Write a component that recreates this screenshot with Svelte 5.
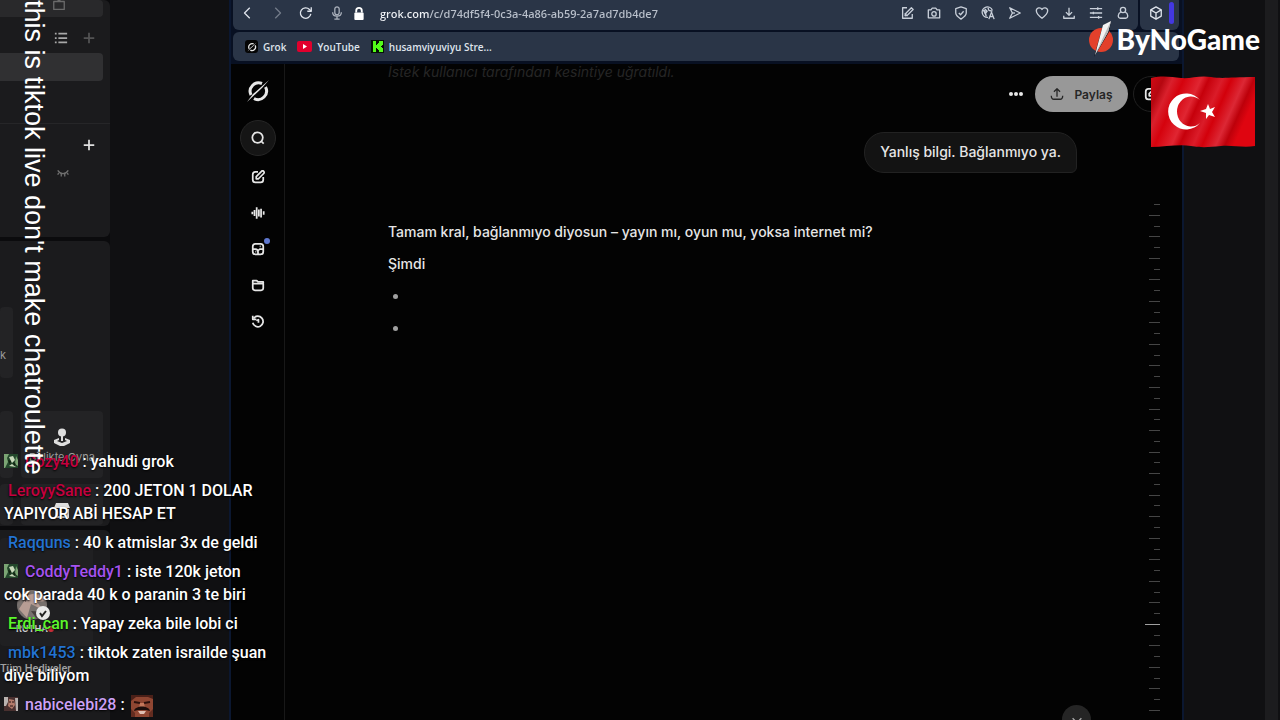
<script lang="ts">
  type Message = {
    name: string;
    color: string;
    text: string;
    badge?: 'green' | 'face';
    emote?: boolean;
  };

  const messages: Message[] = [
    { name: 'Cozy40', color: '#c4003f', text: 'yahudi grok', badge: 'green' },
    { name: 'LeroyySane', color: '#c4003f', text: '200 JETON 1 DOLAR YAPIYOR ABİ HESAP ET' },
    { name: 'Raqquns', color: '#2373d1', text: '40 k atmislar 3x de geldi' },
    { name: 'CoddyTeddy1', color: '#a653f0', text: 'iste 120k jeton cok parada 40 k o paranin 3 te biri', badge: 'green' },
    { name: 'Erdi_can', color: '#5cf72c', text: 'Yapay zeka bile lobi ci' },
    { name: 'mbk1453', color: '#2373d1', text: 'tiktok zaten israilde şuan diye biliyom' },
    { name: 'nabicelebi28', color: '#cda2f7', text: '', badge: 'face', emote: true }
  ];

  const tools = [
    { label: 'Edit page', paths: ['M8 2H3v12h11V9', 'M6 11l1-3 6-6 2 2-6 6z', 'M6 8v3h3'] },
    { label: 'Snapshot', paths: ['M1.500 4.500h3l1.500-2h4l1.500 2h3v9h-13z', 'M8 6.500a2.500 2.500 0 1 0 0 5 2.500 2.500 0 0 0 0-5z'] },
    { label: 'Ad blocker', paths: ['M8 1l6 2v5c0 3-3 5-6 7-3-2-6-4-6-7V3z', 'M5.500 8l2 2 3.500-4'] },
    { label: 'Translate', paths: ['M8 13a6 6 0 1 1 5-8', 'M4 3l3 3-2 2 1 4M8 2l1 3 4 1', 'M3 5l3 1-1 3z', 'M9 15l3-8 3 8M10 12h4'] },
    { label: 'Send', paths: ['M2 2l12 6-12 6 3-6z', 'M5 8h3'] },
    { label: 'Favorites', paths: ['M8 14C4 11 1.500 8.500 1.500 5.500c0-4 5-4.500 6.500-1.500 1.500-3 6.500-2.500 6.500 1.500C14.500 8.500 12 11 8 14z'] },
    { label: 'Downloads', paths: ['M8 2v8M4.500 7L8 10.500 11.500 7', 'M2 11v3h12v-3'] },
    { label: 'Easy setup', paths: ['M1 3h14M1 8h14M1 13h14', 'M10 1.500v3M5 6.500v3M11 11.500v3'] },
    { label: 'Profile', paths: ['M8 1.500a3 3 0 1 0 0 6 3 3 0 0 0 0-6z', 'M5.500 7C2 8 1.500 14 5 14h6c3.500 0 3-6-0.500-7'] }
  ];

  const navItems = [
    { label: 'New chat', paths: ['M8 2H5a3 3 0 0 0-3 3v6a3 3 0 0 0 3 3h6a3 3 0 0 0 3-3V8', 'M6 10V7.500L12 1.500a1.700 1.700 0 0 1 2.500 2.500L8.500 10z'] },
    { label: 'Voice', paths: ['M1.500 6.500v3M4 4.500v7M6.500 1.500v13M9 4v8M11.500 3v10M14.500 6v4'] },
    { label: 'Imagine', paths: ['M5 2h6a3 3 0 0 1 3 3v6a3 3 0 0 1-3 3H5a3 3 0 0 1-3-3V5a3 3 0 0 1 3-3z', 'M2 8h3a3 3 0 0 1 3 3v3', 'M8 10l2-2h4M10 5h1M5 11h1'], dot: true },
    { label: 'Projects', paths: ['M2 6V3h4.500L8 4.500h6V6', 'M2 6.500h12v5A2.500 2.500 0 0 1 11.500 14h-7A2.500 2.500 0 0 1 2 11.500z'] },
    { label: 'History', paths: ['M3 5a6 6 0 1 1-1 5', 'M2 2v4h4', 'M6 7.500l2.500-1V10'] }
  ];

  const activeTick = 39;
  const ticks = Array.from({ length: 48 }, (_, i) => i);
</script>

{#snippet icon(paths: string[])}
  <svg class="icon" viewBox="0 0 16 16" aria-hidden="true">
    {#each paths as d}
      <path {d} />
    {/each}
  </svg>
{/snippet}

{#snippet grokMark()}
  <svg class="grok" viewBox="0 0 24 24" aria-hidden="true">
    <path d="M16 4.500A8.500 8.500 0 0 0 5 16M8 19.500A8.500 8.500 0 0 0 19.500 8" />
    <path class="slash" d="M1 23L7 15 23 1 16 9z" />
  </svg>
{/snippet}

<div class="desktop">
  <aside class="studio">
    <section class="card scenes">
      <div class="source top">
        <svg class="icon" viewBox="0 0 16 16" aria-hidden="true"><path d="M2 4h12v9H2zM6 1l2 3 2-3" /></svg>
      </div>
      <div class="scene-tools">
        <button type="button" aria-label="List view">
          <svg class="icon" viewBox="0 0 16 16"><path d="M1 3h2M5 3h10M1 8h2M5 8h10M1 13h2M5 13h10" /></svg>
        </button>
        <button type="button" class="dim" aria-label="Add scene">
          <svg class="icon" viewBox="0 0 16 16"><path d="M8 2v12M2 8h12" /></svg>
        </button>
      </div>
      <div class="source selected"></div>
      <div class="source-tools">
        <button type="button" aria-label="Add source">
          <svg class="icon" viewBox="0 0 16 16"><path d="M8 2v12M2 8h12" /></svg>
        </button>
      </div>
      <button type="button" class="eye" aria-label="Show source">
        <svg class="icon" viewBox="0 0 16 16"><path d="M2 5c3 5 9 5 12 0M3 8l-1 2M6 9v3M10 9v3M13 8l1 2" /></svg>
      </button>
    </section>

    <section class="card widgets">
      <div class="cell tall">k</div>
      <div class="cell first"></div>
      <div class="cell">
        <svg class="joystick" viewBox="0 0 18 18" aria-hidden="true">
          <path d="M8 8h2v5H8z" />
          <circle cx="9" cy="4.500" r="4" />
          <path fill-rule="evenodd" d="M6 10l-5 2v3l6 3h4l6-3v-3l-5-2v2l2 1-5 2-5-2 2-1z" />
        </svg>
        <span>Birlikte Oyna</span>
      </div>
      <div class="cell first"></div>
      <div class="cell">
        <svg class="joystick" viewBox="0 0 18 18" aria-hidden="true"><path d="M3 2h12l2 5H1zM2 8h3v7h8V8h3v9H2z" /></svg>
      </div>
    </section>

    <section class="card gifts">
      <div class="gift">
        <svg class="avatar" viewBox="0 0 36 32" aria-hidden="true">
          <circle cx="16" cy="16" r="15" fill="#77706d" />
          <path d="M3 20L12 6l13-3 5 9-9 1 6 8-12-6-4 14z" fill="#b79d94" />
          <path d="M5 9l8-6-3 10zM15 22l14 1-8 7z" fill="#463d3d" />
          <circle cx="27" cy="24" r="7" fill="#e8e8e8" />
          <path d="M24 24l2 3 4-5" fill="none" stroke="#222" stroke-width="2" />
        </svg>
        <strong>RUTHA<i></i></strong>
      </div>
      <p>Tüm Hediyeler</p>
    </section>
  </aside>

  <div class="browser">
    <div class="bars">
      <div class="toolbar">
        <div class="address">
          <button type="button" aria-label="Back">{@render icon(['M10 2L4 8l6 6'])}</button>
          <button type="button" class="dim" aria-label="Forward">{@render icon(['M6 2l6 6-6 6'])}</button>
          <button type="button" aria-label="Reload">{@render icon(['M13.500 9A6 6 0 1 1 12 4l2 2', 'M14 1.500V6H9.500'])}</button>
          <button type="button" class="mic" aria-label="Voice search">
            {@render icon(['M8 1a2.500 2.500 0 0 0-2.500 2.500v4a2.500 2.500 0 0 0 5 0v-4A2.500 2.500 0 0 0 8 1z', 'M3 7c0 6 10 6 10 0M8 11.500V15M5 15h6'])}
          </button>
          <svg class="lock" viewBox="0 0 12 14" aria-hidden="true">
            <path d="M3 6V4a3 3 0 0 1 6 0v2" />
            <rect x="1" y="6" width="10" height="8" rx="1" />
          </svg>
          <input type="text" aria-label="Address" value="grok.com/c/d74df5f4-0c3a-4a86-ab59-2a7ad7db4de7" />
          <div class="tools">
            {#each tools as tool}
              <button type="button" aria-label={tool.label}>{@render icon(tool.paths)}</button>
            {/each}
          </div>
        </div>
        <div class="extension">
          <button type="button" aria-label="Extensions">
            {@render icon(['M8 1l6 3.500v7L8 15l-6-3.500v-7z', 'M2 4.500L8 8l6-3.500M8 8v7'])}
          </button>
          <span class="accent"></span>
        </div>
      </div>

      <nav class="bookmarks">
        <a href="#grok"><span class="favicon">{@render grokMark()}</span>Grok</a>
        <a href="#youtube">
          <svg class="youtube" viewBox="0 0 15 11" aria-hidden="true">
            <rect width="15" height="11" rx="2" fill="#e1002d" />
            <path d="M6 3l4 2.500L6 8z" fill="#fff" />
          </svg>YouTube
        </a>
        <a href="#kick">
          <svg class="kick" viewBox="0 0 13 13" aria-hidden="true">
            <rect width="13" height="13" fill="#061206" />
            <path d="M2 1h3v4h1V4h1V3h1V1h4v4h-1v1h-1v1h1v1h1v4H8v-2H7V9H6V8H5v4H2z" fill="#53fc18" />
          </svg>husamviyuviyu Stre...
        </a>
      </nav>
    </div>

    <div class="page">
      <nav class="rail">
        <a class="home" href="#home" aria-label="Grok">{@render grokMark()}</a>
        <button type="button" class="search" aria-label="Search">
          {@render icon(['M7.500 1.500a6 6 0 1 0 0 12 6 6 0 0 0 0-12z', 'M12 12l2.500 2.500'])}
        </button>
        {#each navItems as item}
          <button type="button" aria-label={item.label}>
            {@render icon(item.paths)}
            {#if item.dot}<span class="dot"></span>{/if}
          </button>
        {/each}
      </nav>

      <main>
        <p class="interrupted">İstek kullanıcı tarafından kesintiye uğratıldı.</p>
        <header>
          <button type="button" class="more" aria-label="More">
            <svg viewBox="0 0 16 16" aria-hidden="true">
              <circle cx="3" cy="8" r="2" /><circle cx="8" cy="8" r="2" /><circle cx="13" cy="8" r="2" />
            </svg>
          </button>
          <button type="button" class="share">
            {@render icon(['M8 11V2M4.500 5.500L8 2l3.500 3.500', 'M1.500 10c0 3 1 4 3 4h7c2 0 3-1 3-4'])}
            Paylaş
          </button>
          <button type="button" class="compose" aria-label="New chat">{@render icon(navItems[0].paths)}</button>
        </header>

        <div class="conversation">
          <div class="thread">
            <p class="bubble">Yanlış bilgi. Bağlanmıyo ya.</p>
            <article>
              <p>Tamam kral, bağlanmıyo diyosun – yayın mı, oyun mu, yoksa internet mi?</p>
              <p>Şimdi</p>
              <ul>
                <li></li>
                <li></li>
              </ul>
            </article>
          </div>
          <div class="timeline" aria-hidden="true">
            {#each ticks as tick}
              <span class:long={tick % 2 === 1} class:active={tick === activeTick}></span>
            {/each}
          </div>
        </div>
        <button type="button" class="scroll-down" aria-label="Scroll down">{@render icon(['M3 6l5 5 5-5'])}</button>
      </main>
    </div>
  </div>

  <div class="gutter"><span></span></div>

  <ul class="chat">
    {#each messages as message}
      <li>
        {#if message.badge}
          <svg class="badge" viewBox="0 0 14 14" aria-hidden="true">
            {#if message.badge === 'green'}
              <rect width="14" height="14" fill="#23472b" />
              <path d="M0 0h5L3 4l1 4-3 6H0zM12 2l2 4v6l-3-2z" fill="#7ba574" />
              <path d="M5 3l4-1 2 4-3 3zM5 12l3-2 4 3z" fill="#c9d9bb" />
              <path d="M4 6l3 1-1 4zM9 8l3 2-2 2z" fill="#10220f" />
            {:else}
              <rect width="14" height="14" fill="#49302f" />
              <path d="M0 0h4v5L2 9H0zM11 1h3v13h-2z" fill="#b9b3b0" />
              <path d="M5 2l5 1 1 5-3 4-4-3z" fill="#b37b6b" />
              <path d="M5 5h2M8 5h2M6 9h3" stroke="#241514" />
            {/if}
          </svg>
        {/if}<span class="name" style:color={message.color}>{message.name}</span>
        : {message.text}
        {#if message.emote}
          <svg class="emote" viewBox="0 0 22 22" role="img" aria-label="Laughing face">
            <rect width="22" height="22" fill="#8f4632" />
            <path d="M0 0h22v4L17 2H5L0 6z" fill="#4b2018" />
            <path d="M3 7l6 1M13 8l6-1" stroke="#2c100c" stroke-width="2" />
            <path d="M9 8h4l1 5H8z" fill="#c4775b" />
            <path d="M3 16c1-6 15-6 16 0l-4-1H7z" fill="#1c0d0b" />
            <path d="M7 16h8l-2 3H9z" fill="#dfc0b4" />
            <path d="M0 14l4 4v4H0zM22 14l-4 4v4h4z" fill="#632c20" />
          </svg>
        {/if}
      </li>
    {/each}
  </ul>

  <p class="banner">this is tiktok live don't make chatroulette</p>

  <div class="sponsor">
    <svg viewBox="0 0 26 36" aria-hidden="true">
      <circle cx="13" cy="19" r="12" fill="#e3402b" />
      <path d="M15 4L23 0l-2 11L6 36z" fill="#111821" />
      <path d="M15 4l8-4-3 11L7 34z" fill="#f3f3f3" />
      <path d="M23 0l-3 11L7 34 19 8z" fill="#b9babb" />
    </svg>
    <span>ByNoGame</span>
  </div>

  <svg class="flag" viewBox="0 0 104 72" role="img" aria-label="Turkish flag">
    <defs>
      <linearGradient id="folds" x1="0" y1="0" x2="1" y2="0.300">
        <stop offset="0" stop-color="#d20a14" />
        <stop offset="0.120" stop-color="#b50710" />
        <stop offset="0.200" stop-color="#d9202c" />
        <stop offset="0.300" stop-color="#d5020d" />
        <stop offset="0.450" stop-color="#e02632" />
        <stop offset="0.520" stop-color="#c6000b" />
        <stop offset="0.640" stop-color="#da1c29" />
        <stop offset="0.720" stop-color="#d3000b" />
        <stop offset="0.840" stop-color="#dc2835" />
        <stop offset="0.920" stop-color="#bd000a" />
        <stop offset="1" stop-color="#df0510" />
      </linearGradient>
    </defs>
    <path d="M0 2C12-1 20 1 30 2S48-1 60 1s20 0 44 0v69c-12 2-22-1-34 0s-18 2-30 0-26 1-40 1z" fill="url(#folds)" />
    <path d="M49 24A18 18 0 1 0 49 47A14 15 0 1 1 49 24z" fill="#fff" />
    <path d="M57 28l2 5 5-2-3 5 3 5-6-2-3 4v-6l-6-2 6-2z" fill="#fff" />
  </svg>
</div>

<style>
  :global(body) {
    background: #101012;
  }

  .desktop {
    position: relative;
    display: flex;
    height: 100vh;
    overflow: hidden;
    background: #101012;
    color: #e6e6e6;
    font-family: Inter, 'Liberation Sans', sans-serif;
  }

  .desktop * {
    box-sizing: border-box;
  }

  p,
  ul {
    margin: 0;
    padding: 0;
  }

  button {
    display: flex;
    flex: none;
    align-items: center;
    justify-content: center;
    border: 0;
    padding: 0;
    background: transparent;
    color: inherit;
    font: inherit;
    cursor: pointer;
  }

  a {
    color: inherit;
    text-decoration: none;
  }

  .icon {
    flex: none;
    width: 14px;
    height: 14px;
    fill: none;
    stroke: currentColor;
    stroke-width: 1.500;
    stroke-linejoin: round;
  }

  .dim {
    opacity: 0.4;
  }

  /* streaming studio on the left */
  .studio {
    display: flex;
    flex: none;
    flex-direction: column;
    gap: 4px;
    width: 110px;
    background: #0b0b0d;
  }

  .card {
    flex: none;
    border-radius: 0 6px 6px 0;
    background: #1b1b1d;
  }

  .scenes {
    height: 237px;
  }

  .source {
    width: 103px;
    height: 28px;
    border-radius: 0 4px 4px 0;
    background: #303032;
  }

  .source.top {
    display: flex;
    justify-content: center;
    height: 17px;
    padding-left: 14px;
    background: #29292b;
    color: #6a6a6a;
  }

  .source.top .icon {
    margin-top: -2px;
  }

  .scene-tools,
  .source-tools {
    display: flex;
    align-items: center;
    justify-content: flex-end;
    gap: 14px;
    height: 36px;
    padding: 6px 14px 0 0;
    color: #a8a8a8;
  }

  .scene-tools .icon,
  .source-tools .icon {
    stroke-width: 2;
  }

  .source-tools {
    height: 43px;
    margin-top: 42px;
    padding-top: 0;
    border-top: 1px solid #262628;
    color: #e0e0e0;
  }

  .eye {
    margin-left: 56px;
    color: #707070;
  }

  .widgets {
    display: grid;
    grid-template-columns: 13px 82px;
    grid-template-rows: 98px 67px 41px;
    gap: 6px 8px;
    height: 285px;
    padding-top: 66px;
  }

  .cell {
    display: flex;
    flex-direction: column;
    grid-column: 2;
    align-items: center;
    padding-top: 17px;
    border-radius: 4px;
    background: #232325;
    color: #9b9b9b;
    font-size: 11px;
    line-height: 16px;
    white-space: nowrap;
  }

  .cell.first,
  .cell.tall {
    grid-column: 1;
  }

  .cell.tall {
    align-items: flex-start;
    height: 71px;
    padding-top: 40px;
  }

  .joystick {
    flex: none;
    width: 18px;
    height: 18px;
    margin-bottom: 3px;
    fill: #dedede;
  }

  .gifts {
    height: 200px;
    padding-top: 8px;
  }

  .gift {
    display: flex;
    flex-direction: column;
    width: 93px;
    height: 108px;
    padding: 50px 0 0 16px;
    border-radius: 4px;
    background: #202022;
    color: #d8d8d8;
    font-size: 11px;
    line-height: 14px;
  }

  .gift i {
    display: inline-block;
    width: 6px;
    height: 6px;
    border-radius: 50%;
    background: #cf2e3a;
  }

  .gift strong {
    font-size: 9px;
  }

  .avatar {
    width: 36px;
    height: 34px;
  }

  .gifts p {
    padding-top: 15px;
    color: #a0a0a0;
    font-family: Roboto, sans-serif;
    font-size: 11px;
    font-weight: 500;
    line-height: 16px;
    white-space: nowrap;
  }

  /* browser window */
  .browser {
    display: flex;
    flex: 1;
    flex-direction: column;
    min-width: 0;
    margin-left: 119px;
    border: solid #0b1730;
    border-width: 0 2px;
    background: #030303;
  }

  .bars {
    display: flex;
    flex-direction: column;
    gap: 2px;
    padding: 0 3px 3px 2px;
    background: #081022;
    color: #dfe4ec;
    font-family: 'Open Sans', 'Noto Sans', sans-serif;
    font-size: 11px;
  }

  .toolbar {
    display: flex;
    gap: 2px;
    height: 30px;
  }

  .address,
  .extension,
  .bookmarks {
    display: flex;
    align-items: center;
    background: #2a3547;
  }

  .address {
    flex: 1;
    gap: 15px;
    min-width: 0;
    padding: 0 8px 4px;
    border-radius: 0 0 6px 6px;
  }

  .address .mic {
    margin-left: 2px;
    opacity: 0.7;
  }

  .lock {
    flex: none;
    width: 12px;
    height: 13px;
    margin-left: -6px;
    fill: #fff;
  }

  .lock path {
    fill: none;
    stroke: #fff;
    stroke-width: 2;
  }

  .address input {
    flex: 1;
    min-width: 0;
    border: 0;
    padding: 0;
    background: linear-gradient(90deg, #f2f4f8 49px, #b9c0cb 49px);
    background-clip: text;
    outline: 0;
    color: transparent;
    font: inherit;
    font-weight: 600;
  }

  .tools {
    display: flex;
    gap: 13px;
    color: #c9d0da;
  }

  .extension {
    justify-content: space-between;
    width: 39px;
    padding: 0 5px 4px 9px;
    border-radius: 0 0 6px 6px;
  }

  .accent {
    width: 5px;
    height: 22px;
    border-radius: 3px;
    background: #4338e0;
  }

  .bookmarks {
    gap: 11px;
    height: 29px;
    padding: 0 12px;
    border-radius: 6px;
    font-size: 10px;
    font-weight: 600;
  }

  .bookmarks a {
    display: flex;
    align-items: center;
    gap: 5px;
  }

  .favicon {
    display: flex;
    align-items: center;
    justify-content: center;
    width: 13px;
    height: 13px;
    border-radius: 3px;
    background: #050505;
  }

  .grok {
    width: 10px;
    height: 10px;
    fill: none;
    stroke: #e8e8e8;
    stroke-width: 3;
  }

  .grok .slash {
    fill: #e8e8e8;
    stroke: none;
  }

  .youtube {
    width: 15px;
    height: 11px;
  }

  .kick {
    width: 13px;
    height: 13px;
  }

  /* grok page */
  .page {
    display: flex;
    flex: 1;
    min-height: 0;
  }

  .rail {
    display: flex;
    flex: none;
    flex-direction: column;
    align-items: center;
    width: 54px;
    padding-top: 15px;
    border-right: 1px solid #181818;
  }

  .rail button {
    position: relative;
    width: 36px;
    height: 36px;
  }

  .rail button.search {
    margin: 17px 0 3px;
    border: 1px solid #262626;
    border-radius: 50%;
    background: #151515;
  }

  .home {
    display: flex;
  }

  .home .grok {
    width: 24px;
    height: 24px;
  }

  .rail .icon,
  .compose .icon {
    stroke-width: 2;
  }

  .dot {
    position: absolute;
    top: 7px;
    right: 6px;
    width: 6px;
    height: 6px;
    border-radius: 50%;
    background: #5f78cf;
  }

  main {
    position: relative;
    display: flex;
    flex: 1;
    flex-direction: column;
    min-width: 0;
    overflow: hidden;
  }

  .interrupted {
    height: 12px;
    padding-left: 103px;
    color: #262626;
    font-size: 14px;
    font-style: italic;
    line-height: 16px;
  }

  header {
    display: flex;
    gap: 5px;
    justify-content: flex-end;
    padding-right: 13px;
  }

  .more {
    width: 28px;
    height: 36px;
  }

  .more svg {
    width: 16px;
    height: 16px;
    fill: #e8e8e8;
  }

  .share {
    gap: 10px;
    width: 93px;
    height: 36px;
    border-radius: 18px;
    background: #989898;
    color: #262626;
    font-size: 12px;
    font-weight: 600;
  }

  .compose {
    width: 36px;
    height: 36px;
    border: 1px solid #202020;
    border-radius: 50%;
  }

  .conversation {
    display: flex;
    flex: 1;
    min-height: 0;
    font-size: 14px;
    font-weight: 500;
    line-height: 20px;
  }

  .thread {
    display: flex;
    flex: 1;
    flex-direction: column;
    min-width: 0;
    padding: 20px 67px 0 103px;
  }

  .bubble {
    align-self: flex-end;
    padding: 9px 15px 10px;
    border: 1px solid #222;
    border-radius: 20px 20px 6px 20px;
    background: #131313;
  }

  article {
    display: flex;
    flex-direction: column;
    gap: 12px;
    padding-top: 49px;
  }

  article ul {
    display: flex;
    flex-direction: column;
    gap: 12px;
    padding-left: 5px;
    list-style: none;
  }

  article li {
    display: flow-root;
    height: 20px;
  }

  article li::before {
    display: block;
    width: 5px;
    height: 5px;
    margin-top: 8px;
    border-radius: 50%;
    background: #a0a0a0;
    content: '';
  }

  .timeline {
    display: flex;
    flex: none;
    flex-direction: column;
    align-items: flex-end;
    justify-content: space-between;
    width: 16px;
    margin-right: 22px;
    padding: 92px 0 9px;
  }

  .timeline span {
    width: 6px;
    height: 1px;
    background: #454545;
  }

  .timeline .long {
    width: 11px;
  }

  .timeline .active {
    width: 15px;
    background: #a0a0a0;
  }

  .scroll-down {
    position: absolute;
    right: 91px;
    bottom: -14px;
    width: 29px;
    height: 29px;
    border-radius: 50%;
    background: #252525;
    color: #aaa;
  }

  .gutter {
    display: flex;
    flex: none;
    justify-content: flex-end;
    width: 96px;
    padding-right: 2px;
  }

  .gutter span {
    width: 13px;
    background: #1c1c1e;
  }

  /* stream overlays */
  .banner {
    position: absolute;
    top: 0;
    left: 19px;
    color: #fff;
    font-family: 'Liberation Sans', sans-serif;
    font-size: 27px;
    line-height: 30px;
    white-space: nowrap;
    writing-mode: vertical-rl;
  }

  .chat {
    position: absolute;
    top: 450px;
    left: 4px;
    display: flex;
    flex-direction: column;
    gap: 6px;
    width: 266px;
    color: #fff;
    font-family: Roboto, sans-serif;
    font-size: 16px;
    font-weight: 500;
    line-height: 23px;
    list-style: none;
    text-shadow: 0 1px 2px #000;
  }

  .badge {
    width: 14px;
    height: 14px;
    margin-right: 3px;
    vertical-align: -1px;
  }

  .name {
    margin-left: 4px;
  }

  .emote {
    width: 22px;
    height: 22px;
    margin-left: 2px;
    vertical-align: middle;
  }

  .sponsor {
    position: absolute;
    top: 21px;
    right: 20px;
    display: flex;
    align-items: center;
    gap: 3px;
    color: #fff;
    font-family: Lato, sans-serif;
    font-size: 28px;
    font-weight: 900;
    line-height: 36px;
  }

  .sponsor svg {
    width: 26px;
    height: 36px;
  }

  .flag {
    position: absolute;
    top: 76px;
    right: 25px;
    width: 104px;
    height: 72px;
  }
</style>
